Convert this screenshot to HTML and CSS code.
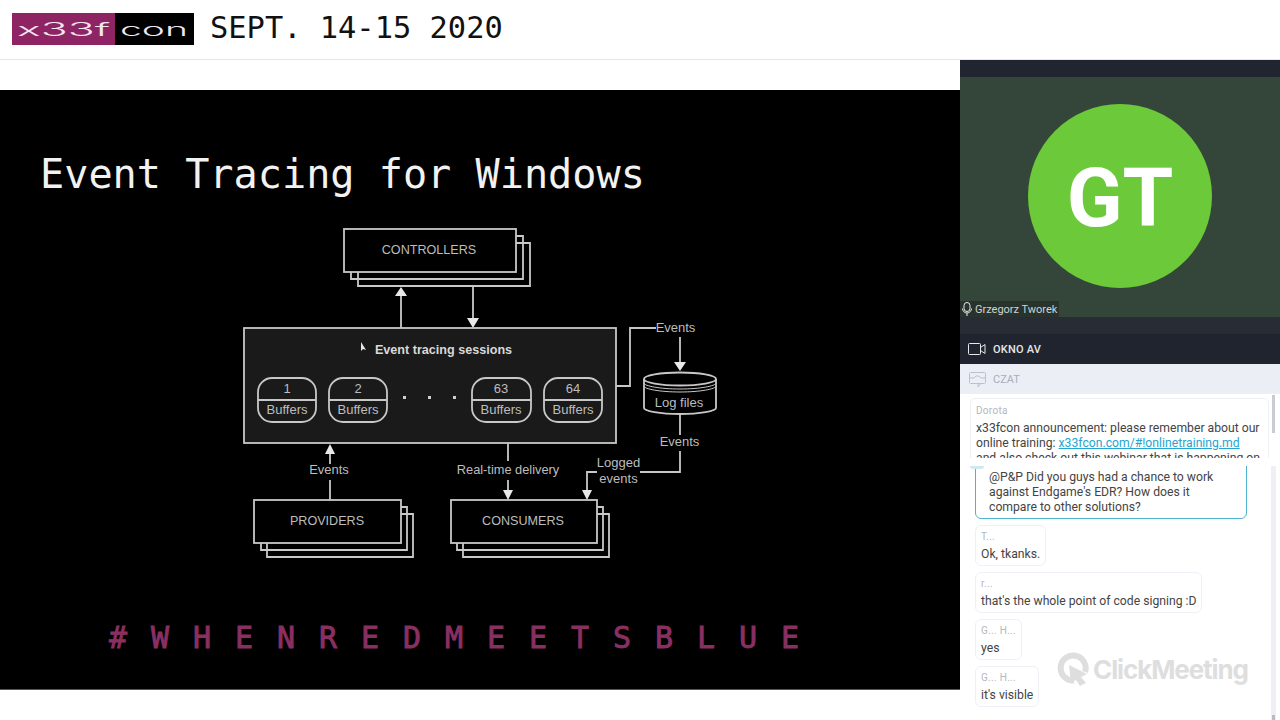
FILE: index.html
```html
<!DOCTYPE html>
<html lang="en">
<head>
    <meta charset="UTF-8">
    <title>x33fcon - Event Tracing for Windows</title>
    <link rel="stylesheet" href="styles.css">
</head>
<body>
    <header class="top">
        <svg class="logo" width="182" height="32" viewBox="0 0 182 32">
            <rect width="103" height="32" fill="#8f2465"/>
            <rect x="103" width="79" height="32" fill="#000"/>
            <text class="logo-text" x="5" y="23" font-size="18" textLength="93" lengthAdjust="spacingAndGlyphs">x33f</text>
            <text class="logo-text" x="108" y="23" font-size="17" textLength="68" lengthAdjust="spacingAndGlyphs">con</text>
        </svg>
        <div class="date">SEPT. 14-15 2020</div>
    </header>

    <div class="main">
        <section class="stage">
            <div class="slide">
                <h1 class="slide-title">Event Tracing for Windows</h1>
                <svg class="diagram" width="960" height="340" viewBox="0 225 960 340">
                    <!-- controllers -->
                    <g class="line">
                        <path d="M358 272V286H530V243H516"/>
                        <path d="M351 272V279H523V236H516"/>
                        <rect x="344" y="229" width="172" height="43"/>
                        <path d="M401 296V328M473 286V318"/>
                    </g>
                    <path class="head" d="M401 287l6 9h-12zM473 328l-6-10h12z"/>
                    <text class="label caps" x="429" y="253.500">CONTROLLERS</text>

                    <!-- sessions -->
                    <rect class="line session" x="244" y="328" width="372" height="115"/>
                    <polygon class="head" points="361,342 361,351 363,349 366,350"/>
                    <text class="label bold" x="443.500" y="353.500">Event tracing sessions</text>
                    <g class="line">
                        <rect x="258" y="378" width="58" height="44" rx="14"/>
                        <rect x="329" y="378" width="58" height="44" rx="14"/>
                        <rect x="472" y="378" width="59" height="44" rx="14"/>
                        <rect x="544" y="378" width="58" height="44" rx="14"/>
                        <path d="M258 400H316M329 400H387M472 400H531M544 400H602"/>
                    </g>
                    <text class="label" x="287" y="393">1</text>
                    <text class="label" x="358" y="393">2</text>
                    <text class="label" x="501" y="393">63</text>
                    <text class="label" x="573" y="393">64</text>
                    <text class="label" x="287" y="414">Buffers</text>
                    <text class="label" x="358" y="414">Buffers</text>
                    <text class="label" x="501" y="414">Buffers</text>
                    <text class="label" x="573" y="414">Buffers</text>
                    <path class="dots" d="M403 396h3v3h-3zM428 396h3v3h-3zM453 396h3v3h-3z"/>

                    <!-- log files -->
                    <g class="line">
                        <path d="M616 386H630V328H656M680 337V362"/>
                        <path d="M644 379V408C644 411 660 414 680 414S716 411 716 408V379"/>
                        <ellipse cx="680" cy="379" rx="36" ry="6.500"/>
                        <path class="thin" d="M644 383C644 386 660 389 680 389S716 386 716 383M644 386C644 389 660 392 680 392S716 389 716 386"/>
                        <path d="M680 414V435M680 451V472H640M597 472H587V490"/>
                    </g>
                    <path class="head" d="M680 371l-6-9h12zM587 500l-5-10h10z"/>
                    <text class="label" x="675.500" y="332">Events</text>
                    <text class="label" x="679" y="407">Log files</text>
                    <text class="label" x="679.500" y="446">Events</text>
                    <text class="label" x="618.500" y="467">Logged</text>
                    <text class="label" x="618.500" y="483">events</text>

                    <!-- consumers -->
                    <g class="line">
                        <path d="M508 443V461M508 480V490"/>
                        <path d="M463 543V557H609V514H597"/>
                        <path d="M457 543V550H603V507H597"/>
                        <rect x="451" y="500" width="146" height="43"/>
                    </g>
                    <path class="head" d="M508 500l-5-10h10z"/>
                    <text class="label delivery" x="508" y="474">Real-time delivery</text>
                    <text class="label caps" x="523" y="524.500">CONSUMERS</text>

                    <!-- providers -->
                    <g class="line">
                        <path d="M330 454V464M330 480V500"/>
                        <path d="M267 543V557H413V514H401"/>
                        <path d="M261 543V550H407V507H401"/>
                        <rect x="254" y="500" width="147" height="43"/>
                    </g>
                    <path class="head" d="M330 444l5 10h-10z"/>
                    <text class="label" x="329" y="474">Events</text>
                    <text class="label caps" x="327" y="524.500">PROVIDERS</text>
                </svg>
                <div class="slide-tag">#WHENREDMEETSBLUE</div>
            </div>
        </section>

        <aside class="side">
            <div class="side-strip"></div>
            <div class="video">
                <div class="avatar">GT</div>
                <div class="speaker">
                    <svg width="10" height="14" viewBox="0 0 10 14" class="icon-line">
                        <rect x="2" y="0.500" width="6" height="9" rx="3"/>
                        <path d="M0.500 6.500C0.500 9 2.500 11 5 11S9.500 9 9.500 6.500M5 11V14"/>
                    </svg>
                    <span>Grzegorz Tworek</span>
                </div>
            </div>
            <div class="av-bar">
                <svg width="18" height="14" viewBox="0 0 18 14" class="icon-line">
                    <rect x="0.500" y="1.500" width="12" height="11" rx="1"/>
                    <path d="M12.500 5.500L17 2.500V11.500L12.500 8.500"/>
                </svg>
                <span>OKNO AV</span>
            </div>
            <div class="chat-head">
                <svg width="17" height="17" viewBox="0 0 17 17" class="icon-chat">
                    <rect x="0.500" y="1.500" width="16" height="11" rx="1"/>
                    <path d="M0.500 7H5L7 5H10L12 7H16.500M9 12.500V16L12 12.500"/>
                </svg>
                <span>CZAT</span>
            </div>
            <div class="chat">
                <div class="pinned">
                    <div class="pinned-card">
                        <div class="msg-name">Dorota</div>
                        <div class="msg-text">x33fcon announcement: please remember about our online training: <a href="#">x33fcon.com/#!onlinetraining.md</a> and also check out this webinar that is happening on</div>
                    </div>
                    <div class="pinned-thumb"></div>
                </div>
                <div class="lower">
                    <div class="msg-list">
                        <div class="msg msg-active">
                            <div class="msg-text">@P&amp;P Did you guys had a chance to work against Endgame's EDR? How does it compare to other solutions?</div>
                        </div>
                        <div class="msg">
                            <div class="msg-name">T...</div>
                            <div class="msg-text">Ok, tkanks.</div>
                        </div>
                        <div class="msg">
                            <div class="msg-name">r...</div>
                            <div class="msg-text">that's the whole point of code signing :D</div>
                        </div>
                        <div class="msg">
                            <div class="msg-name">G... H...</div>
                            <div class="msg-text">yes</div>
                        </div>
                        <div class="msg">
                            <div class="msg-name">G... H...</div>
                            <div class="msg-text">it's visible</div>
                        </div>
                        <div class="active-notch"></div>
                    </div>
                    <div class="track"><div class="track-thumb"></div></div>
                </div>
                <div class="watermark">
                    <svg width="32" height="34" viewBox="0 0 32 34">
                        <path class="wm-ring" d="M17 28.500A12.500 12.500 0 1 1 28 20"/>
                        <path class="wm-arrow" d="M12 13L30 22L24 25L29 31L23 34L19 28L14 31Z"/>
                    </svg>
                    <span>ClickMeeting</span>
                </div>
            </div>
        </aside>
    </div>
</body>
</html>
```

FILE: styles.css
```css
html, body {
    margin: 0;
    padding: 0;
}

body {
    width: 1280px;
    height: 720px;
    overflow: hidden;
    background-color: #fff;
    font-family: Roboto, "Liberation Sans", sans-serif;
}

.top {
    height: 59px;
    border-bottom: 1px solid #e6e6e6;
    display: flex;
    align-items: center;
    padding-left: 12px;
    gap: 16px;
}

.logo {
    display: block;
    margin-top: -1px;
}

.logo-text {
    font-family: Inter, sans-serif;
    font-weight: 300;
    fill: #f0e8ee;
}

.date {
    font-family: "DejaVu Sans Mono", monospace;
    font-size: 30.400px;
    color: #111;
    margin-top: -4px;
}

.main {
    display: flex;
    height: 660px;
}

.stage {
    width: 960px;
    padding-top: 30px;
    box-sizing: border-box;
}

.slide {
    height: 600px;
    background-color: #000;
    border-bottom: 1px solid #555;
    box-sizing: border-box;
    padding-top: 60px;
}

.slide-title {
    margin: 0 0 27px 40px;
    font-family: "DejaVu Sans Mono", monospace;
    font-weight: normal;
    font-size: 40.200px;
    line-height: 48px;
    color: #f2f2f2;
}

.diagram {
    display: block;
}

.line {
    fill: none;
    stroke: #c8c8c8;
    stroke-width: 1.8;
}

.thin {
    stroke-width: 1;
}

.session {
    fill: #1a1a1a;
}

.head {
    fill: #e8e8e8;
}

.dots {
    fill: #cfcfcf;
}

.label {
    font-family: "Liberation Sans", sans-serif;
    font-size: 13px;
    fill: #bdbdbd;
    text-anchor: middle;
}

.label.caps {
    font-size: 12.600px;
}

.label.delivery {
    font-size: 12.800px;
}

.label.bold {
    font-size: 12.600px;
    font-weight: bold;
    fill: #d8d8d8;
}

.slide-tag {
    margin: 55px 0 0 109px;
    font-family: "DejaVu Sans Mono", monospace;
    font-size: 30px;
    line-height: 36px;
    letter-spacing: 23.940px;
    color: #8a2f62;
    -webkit-text-stroke: 0.9px #8a2f62;
    white-space: nowrap;
}

.side {
    width: 320px;
    display: flex;
    flex-direction: column;
}

.side-strip {
    height: 17px;
    background-color: #21252f;
}

.video {
    height: 240px;
    position: relative;
    background-color: #34453a;
    display: flex;
    align-items: center;
    justify-content: center;
}

.avatar {
    width: 184px;
    height: 184px;
    box-sizing: border-box;
    padding-top: 4px;
    border-radius: 50%;
    background-color: #6cc93a;
    color: #fff;
    font-weight: bold;
    font-size: 82px;
    display: flex;
    align-items: center;
    justify-content: center;
    margin-top: -2px;
}

.speaker {
    position: absolute;
    left: 0;
    bottom: 0;
    height: 16px;
    padding: 0 2px;
    display: flex;
    align-items: center;
    gap: 3px;
    background-color: #29332d;
    color: #d0d3d1;
    font-size: 11px;
}

.icon-line {
    fill: none;
    stroke: #e8e8e8;
    stroke-width: 1;
}

.av-bar {
    height: 30px;
    border-top: 17px solid #282c35;
    background-color: #20242e;
    display: flex;
    align-items: center;
    padding-left: 8px;
    gap: 7px;
    color: #e6e6e6;
    font-size: 11px;
    font-weight: 500;
    letter-spacing: 0.2px;
}

.chat-head {
    height: 30px;
    background-color: #eceef6;
    display: flex;
    align-items: center;
    padding-left: 9px;
    gap: 7px;
    color: #a8adbc;
    font-size: 11px;
}

.icon-chat {
    fill: none;
    stroke: #bcc0ce;
    stroke-width: 1;
}

.chat {
    position: relative;
    height: 326px;
    background-color: #fff;
}

.pinned {
    height: 64px;
    display: flex;
    align-items: flex-start;
    overflow: hidden;
    padding: 4px 4px 0 10px;
    box-sizing: border-box;
}

.pinned-card {
    flex: 1;
    border: 1px solid #eef0f6;
    border-radius: 5px;
    padding: 5px 7px 5px 5px;
}

.pinned-card .msg-name {
    margin-bottom: 3px;
}

.pinned-thumb {
    width: 3px;
    height: 38px;
    margin: -3px 1px 0 3px;
    background-color: #c9ccd4;
}

.msg-name {
    font-size: 10px;
    line-height: 14px;
    color: #b4b6c0;
    letter-spacing: 0.3px;
}

.msg-text {
    font-size: 12.200px;
    line-height: 15px;
    color: #444;
}

.msg-text a {
    color: #25a5cf;
}

.lower {
    display: flex;
    height: 254px;
    margin-top: 8px;
}

.msg-list {
    position: relative;
    width: 311px;
    box-sizing: border-box;
    padding: 0 0 13px 15px;
    display: flex;
    flex-direction: column;
    justify-content: flex-end;
    align-items: flex-start;
    gap: 6px;
    overflow: hidden;
}

.msg {
    flex-shrink: 0;
    border: 1px solid #eef0f6;
    border-radius: 6px;
    padding: 4px 5px 3px;
}

.msg .msg-text {
    line-height: 16px;
    margin-top: 2px;
}

.msg-active {
    width: 272px;
    box-sizing: border-box;
    border: 1px solid #4fb3d0;
    padding: 15px 20px 3px 13px;
}

.msg-active .msg-text {
    line-height: 15px;
}

.active-notch {
    position: absolute;
    left: 10px;
    top: 0;
    width: 14px;
    height: 3px;
    background-color: #cfe8f1;
    border-radius: 0 0 7px 7px;
}

.track {
    width: 5px;
    background-color: #eef0f6;
    display: flex;
    align-items: flex-end;
    justify-content: center;
}

.track-thumb {
    width: 3px;
    height: 5px;
    background-color: #b9bcc6;
}

.watermark {
    position: absolute;
    left: 97px;
    top: 258px;
    display: flex;
    align-items: center;
    gap: 4px;
    color: #dedede;
    font-family: Inter, sans-serif;
    font-size: 26px;
    font-weight: 700;
    letter-spacing: -1.100px;
}

.wm-ring {
    fill: none;
    stroke: #dedede;
    stroke-width: 6;
}

.wm-arrow {
    fill: #dedede;
}
```
